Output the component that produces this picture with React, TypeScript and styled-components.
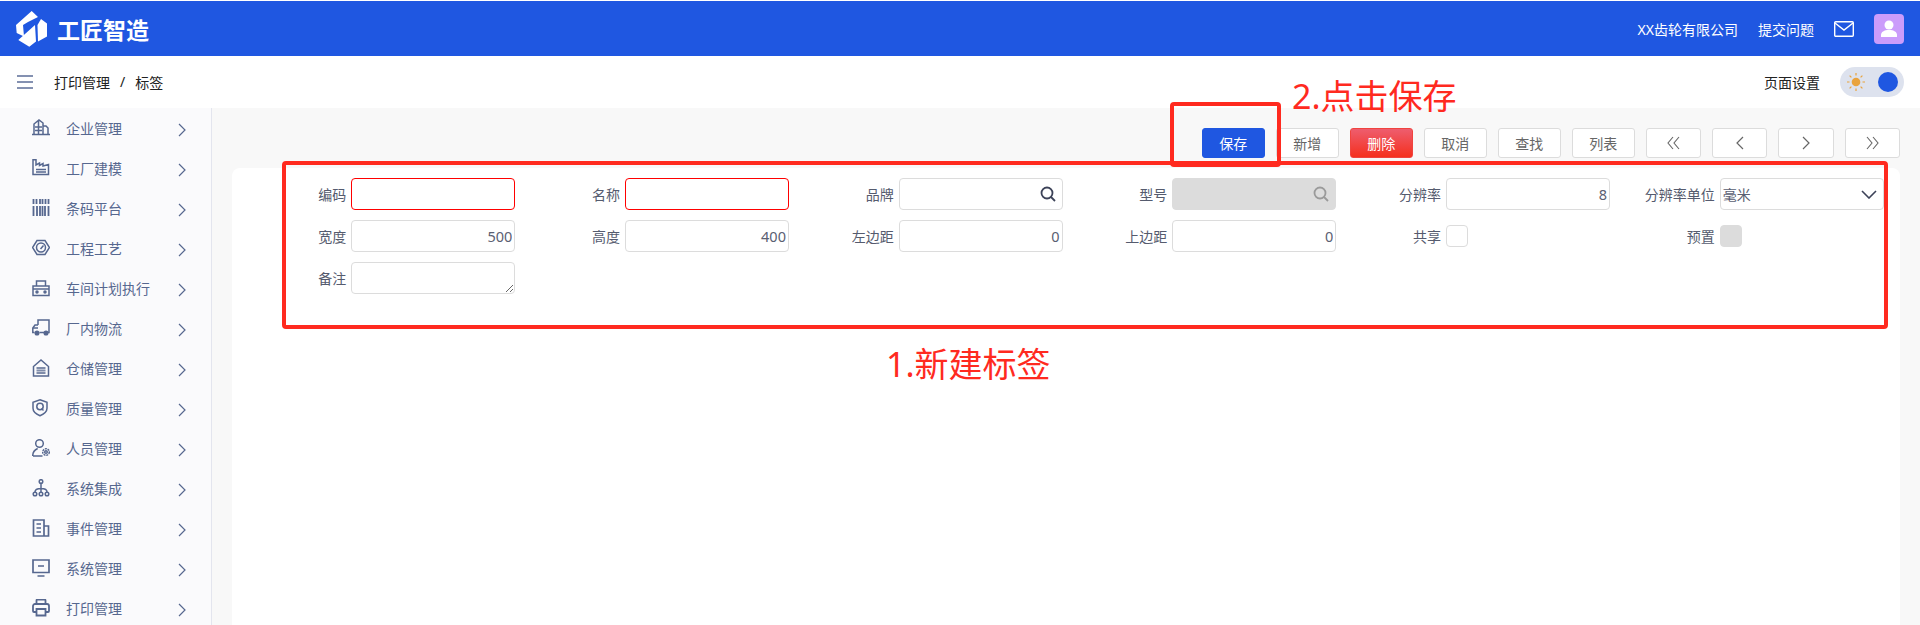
import React from "react"
import styled, { createGlobalStyle } from "styled-components"

const CJK = `"Noto Sans", "Noto Sans CJK SC", sans-serif`

const GlobalStyle = createGlobalStyle`
  html, body {
    margin: 0;
    padding: 0;
    background: #fff;
    font-family: ${CJK};
  }
  * { box-sizing: border-box; }
`

const Page = styled.div`
  position: relative;
  width: 1920px;
  height: 625px;
  padding-top: 1px;
  overflow: hidden;
  display: flex;
  flex-direction: column;
`

const Header = styled.header`
  height: 55px;
  flex: none;
  background: #1f57e1;
  color: #fff;
  display: flex;
  align-items: center;
  padding: 0 16px;
`

const Brand = styled.div`
  display: flex;
  align-items: center;
  gap: 9px;
  font-size: 23px;
  font-weight: 700;
  letter-spacing: 0;
  flex: 1;
`

const HeaderText = styled.span<{ $gap: number }>`
  font-size: 14px;
  margin-right: ${(p) => p.$gap}px;
`

const Avatar = styled.div`
  width: 30px;
  height: 30px;
  border-radius: 4px;
  background: #cb9cfb;
  display: flex;
  align-items: center;
  justify-content: center;
`

const SubBar = styled.div`
  height: 52px;
  flex: none;
  background: #fff;
  display: flex;
  align-items: center;
  padding: 0 16px 0 17px;
`

const Crumbs = styled.div`
  margin-left: 21px;
  font-size: 14px;
  color: #222;
  display: flex;
  gap: 10px;
  flex: 1;
`

const SettingLabel = styled.span`
  font-size: 14px;
  color: #222;
  margin-right: 20px;
`

const Toggle = styled.div`
  width: 64px;
  height: 30px;
  border-radius: 15px;
  background: #dde2ee;
  display: flex;
  align-items: center;
  justify-content: space-between;
  padding: 0 6px 0 7px;
`

const Knob = styled.div`
  width: 20px;
  height: 20px;
  border-radius: 50%;
  background: #1f57e1;
`

const Body = styled.div`
  flex: 1;
  display: flex;
  min-height: 0;
`

const Sidebar = styled.nav`
  width: 212px;
  flex: none;
  background: #fafafc;
  border-right: 1px solid #e3e5ee;
`

const NavItem = styled.div`
  height: 40px;
  display: flex;
  align-items: center;
  padding-left: 32px;
  color: #56678f;
  font-size: 14px;
`

const NavLabel = styled.span`
  margin-left: 16px;
  width: 112px;
`

const NavArrow = styled.span`
  display: flex;
  margin-top: 3px;
`

const Main = styled.main`
  flex: 1;
  background: #f8f8f8;
  padding: 20px 20px 0;
  display: flex;
  flex-direction: column;
  gap: 10px;
`

const Toolbar = styled.div`
  display: flex;
  justify-content: flex-end;
  gap: 11px;
`

const Button = styled.button<{ $kind?: "save" | "danger"; $icon?: boolean }>`
  width: ${(p) => (p.$icon ? 55.3 : 63)}px;
  height: 30px;
  padding: 0;
  border-radius: 3px;
  border: 1px solid ${(p) => (p.$kind === "save" ? "#1f57e1" : p.$kind === "danger" ? "#f0443f" : "#dcdcdc")};
  background: ${(p) =>
    p.$kind === "save" ? "#1f57e1" : p.$kind === "danger" ? "linear-gradient(#ee5d6e, #f5301e)" : "#fff"};
  color: ${(p) => (p.$kind ? "#fff" : "#666")};
  font: 14px ${CJK};
  display: flex;
  align-items: center;
  justify-content: center;
`

const Card = styled.section`
  flex: 1;
  background: #fff;
  border-radius: 8px 8px 0 0;
  padding: 10px 0 0 9.6px;
`

const FormGrid = styled.div`
  display: grid;
  grid-template-columns: repeat(6, 273.7px);
  row-gap: 10px;
`

const Field = styled.label`
  display: flex;
  align-items: center;
  justify-content: flex-end;
  gap: 5px;
  height: 32px;
`

const FieldLabel = styled.span`
  font-size: 14px;
  color: #555b6e;
  white-space: nowrap;
`

const Control = styled.div`
  position: relative;
  width: 164px;
  height: 32px;
  flex: none;
  display: flex;
  align-items: center;
`

const TextInput = styled.input<{ $required?: boolean; $disabled?: boolean }>`
  width: 100%;
  height: 100%;
  border: 1px solid ${(p) => (p.$required ? "#f00" : "#dcdcdc")};
  border-radius: 4px;
  background: ${(p) => (p.$disabled ? "#dcdcdc" : "#fff")};
  padding: 0 2px;
  text-align: right;
  font: 14.500px ${CJK};
  color: #5a6072;
  outline: none;
`

const TextArea = styled.textarea`
  display: block;
  width: 100%;
  height: 100%;
  border: 1px solid #dcdcdc;
  border-radius: 4px;
  background: #fff;
  padding: 3px;
  outline: none;
  font: 14px ${CJK};
`

const SearchIcon = styled.svg`
  position: absolute;
  right: 7px;
  top: 8px;
`

const SelectBox = styled.div`
  width: 100%;
  height: 100%;
  border: 1px solid #dcdcdc;
  border-radius: 4px;
  background: #fff;
  padding: 0 6px 0 2px;
  display: flex;
  align-items: center;
  justify-content: space-between;
  font-size: 14px;
  color: #5a6072;
`

const Check = styled.div<{ $off?: boolean }>`
  width: 22px;
  height: 22px;
  border: 1px solid #dcdcdc;
  border-radius: 4px;
  background: ${(p) => (p.$off ? "#dcdcdc" : "#fff")};
`

/* annotations drawn over the screenshot */
const Mark = styled.div<{ $l: number; $t: number; $w: number; $h: number }>`
  position: absolute;
  left: ${(p) => p.$l}px;
  top: ${(p) => p.$t}px;
  width: ${(p) => p.$w}px;
  height: ${(p) => p.$h}px;
  border: 4px solid #ff2a1f;
  border-radius: 4px;
  pointer-events: none;
`

const Note = styled.div<{ $l: number; $t: number }>`
  position: absolute;
  left: ${(p) => p.$l}px;
  top: ${(p) => p.$t}px;
  font-size: 34px;
  line-height: 40px;
  color: #ff2a1f;
  white-space: nowrap;
`

const Ico = ({ children }: { children: React.ReactNode }) => (
  <svg width="18" height="18" viewBox="0 0 18 18" fill="none" stroke="#56678f" strokeWidth="1.500" style={{ flex: "none" }}>
    {children}
  </svg>
)

const navItems: [string, React.ReactNode][] = [
  ["企业管理", <Ico><path d="M0 15.500h18M2 15V5l5-4 4 3v11M11 7h3l2 2v6M6.500 2v13M3 8h7M3 11.500h7" /></Ico>],
  ["工厂建模", <Ico><path d="M1 15.500V.8h3V6l3.500-2v2.500L11 4.500V7l5.500-1.500v10zM4 10.500h10M4 13h10" /></Ico>],
  ["条码平台", <Ico><path d="M1.500 0v5M4.500 0v5M8 0v5M10.500 0v5M13.500 0v5M16.500 0v5M1.500 7v10M5 7v10M8 7v10M10.500 7v10M13 7v10M16.500 7v10" strokeWidth="1.800" /></Ico>],
  ["工程工艺", <Ico><path d="M5 1.500h8L17.500 8.500 13 15.500H5L.5 8.500z" /><circle cx="9" cy="8.500" r="4.500" /><path d="M8.500 10l3-3.500" /></Ico>],
  ["车间计划执行", <Ico><path d="M4.500 7V2h9v5M1 7h16v9.500H1zM1 10h16" /><circle cx="5" cy="13" r="1" fill="#56678f" /><circle cx="13" cy="13" r="1" fill="#56678f" /></Ico>],
  ["厂内物流", <Ico><path d="M6 6V1h11v12.500H7.500M6 6H3L.8 9v4.500H2.500" /><circle cx="5" cy="14" r="1.800" fill="#56678f" /><circle cx="14" cy="14" r="1.800" fill="#56678f" /><path d="M1 9h5" /></Ico>],
  ["仓储管理", <Ico><path d="M1.500 7.500L9 1l7.500 6.500v9.500h-15z" /><path d="M4.500 9h9M4.500 11.500h9M4.500 14h9" strokeWidth="2" opacity=".75" /></Ico>],
  ["质量管理", <Ico><path d="M8 .8l7 2.500v6c0 3.500-3.500 6-7 7.500-3.500-1.500-7-4-7-7.500v-6z" /><circle cx="8" cy="7.500" r="3.200" /><path d="M9.500 9.500l2 2" /></Ico>],
  ["人员管理", <Ico><circle cx="7.500" cy="4.500" r="3.800" /><path d="M.7 17c0-4 1.500-6 5-7.500M10.500 17H1" /><circle cx="14" cy="13" r="1.300" /><circle cx="14" cy="13" r="3.300" strokeDasharray="2 .8" /></Ico>],
  ["系统集成", <Ico><circle cx="9" cy="2.500" r="1.800" /><path d="M9 4.500V13M3 13c0-2 2-3.500 6-3.500s6 1.500 6 3.500" /><circle cx="3" cy="15" r="1.800" /><circle cx="9" cy="15" r="1.800" /><circle cx="15" cy="15" r="1.800" /></Ico>],
  ["事件管理", <Ico><path d="M1.500 1h10.500v16H1.500zM12 7h4.500v10H12M4.500 5h4.500M4.500 9h4.500M4.500 13h4.500" strokeWidth="1.700" /></Ico>],
  ["系统管理", <Ico><path d="M1 1h16v12.500H1zM6 7h6M5.500 17h7" strokeWidth="1.700" /></Ico>],
  ["打印管理", <Ico><path d="M4.500 5V1.500c0-.5.5-1 1-1h7c.5 0 1 .5 1 1V5M4.500 13H2c-.5 0-1-.5-1-1V7c0-1 1-2 2-2h12c1 0 2 1 2 2v5c0 .5-.5 1-1 1h-2.500M4.500 10h9v6.500h-9z" strokeWidth="1.800" /></Ico>],
]

const Chevron = ({ color = "#56678f", left = false }: { color?: string; left?: boolean }) => (
  <svg width="8" height="14" viewBox="0 0 8 14" fill="none" stroke={color} strokeWidth="1.200">
    <path d={left ? "M7 1L1 7l6 6" : "M1 1l6 6-6 6"} />
  </svg>
)

const Double = ({ left = false }: { left?: boolean }) => (
  <svg width="13" height="14" viewBox="0 0 13 14" fill="none" stroke="#666" strokeWidth="1.100">
    <path d={left ? "M6 1L1 7l5 6M12 1L7 7l5 6" : "M1 1l5 6-5 6M7 1l5 6-5 6"} />
  </svg>
)

const Search = ({ color }: { color: string }) => (
  <SearchIcon width="16" height="16" viewBox="0 0 16 16" fill="none" stroke={color} strokeWidth="1.800">
    <circle cx="7" cy="7" r="5.500" />
    <path d="M11 11l4 4" />
  </SearchIcon>
)

const Logo = () => (
  <svg width="32" height="36" viewBox="0 0 32 36" fill="#fff">
    <path d="M0 14L15.700 0 22 6l-10 5-5 3 1 11.500-7.300-3.500z" />
    <path d="M25 8l6 4.500v13L22 30.500 21.500 14z" />
    <path d="M2.300 29L14 18.500 19 14l1 16.500-6.700 5.200z" />
  </svg>
)

const Sun = () => (
  <svg width="18" height="18" viewBox="0 0 18 18" stroke="#e9a33d" strokeWidth="1.200" style={{ flex: "none" }}>
    <circle cx="9" cy="9" r="4.300" fill="#e9a33d" stroke="none" />
    <path d="M9 0v2.500M9 15.500V18M0 9h2.500M15.500 9H18M2.600 2.600l1.800 1.800M13.600 13.600l1.800 1.800M2.600 15.400l1.800-1.800M13.600 4.400l1.800-1.800" />
  </svg>
)

const App = () => {
  return (
    <Page>
      <GlobalStyle />
      <Header>
        <Brand>
          <Logo />
          工匠智造
        </Brand>
        <HeaderText $gap={20}>XX齿轮有限公司</HeaderText>
        <HeaderText $gap={20}>提交问题</HeaderText>
        <svg width="20" height="16" viewBox="0 0 20 16" fill="none" stroke="#fff" strokeWidth="1.400" style={{ marginRight: 20 }}>
          <rect x=".7" y=".7" width="18.600" height="14.600" rx="1" />
          <path d="M1 2l9 7 9-7" />
        </svg>
        <Avatar>
          <svg width="16" height="18" viewBox="0 0 16 18" fill="#fff">
            <circle cx="8" cy="5" r="4.500" />
            <path d="M0 17v-2c0-3 3-5 8-5s8 2 8 5v2z" />
          </svg>
        </Avatar>
      </Header>
      <SubBar>
        <svg width="16" height="14" viewBox="0 0 16 14" stroke="#5c6e98" strokeWidth="1.500">
          <path d="M0 1h16M0 7h16M0 13h16" />
        </svg>
        <Crumbs>
          <span>打印管理</span>
          <span>/</span>
          <span>标签</span>
        </Crumbs>
        <SettingLabel>页面设置</SettingLabel>
        <Toggle>
          <Sun />
          <Knob />
        </Toggle>
      </SubBar>
      <Body>
        <Sidebar>
          {navItems.map(([label, icon]) => (
            <NavItem key={label}>
              {icon}
              <NavLabel>{label}</NavLabel>
              <NavArrow><Chevron /></NavArrow>
            </NavItem>
          ))}
        </Sidebar>
        <Main>
          <Toolbar>
            <Button $kind="save">保存</Button>
            <Button>新增</Button>
            <Button $kind="danger">删除</Button>
            <Button>取消</Button>
            <Button>查找</Button>
            <Button>列表</Button>
            <Button $icon><Double left /></Button>
            <Button $icon><Chevron color="#666" left /></Button>
            <Button $icon><Chevron color="#666" /></Button>
            <Button $icon><Double /></Button>
          </Toolbar>
          <Card>
            <FormGrid>
              <Field>
                <FieldLabel>编码</FieldLabel>
                <Control><TextInput $required readOnly /></Control>
              </Field>
              <Field>
                <FieldLabel>名称</FieldLabel>
                <Control><TextInput $required readOnly /></Control>
              </Field>
              <Field>
                <FieldLabel>品牌</FieldLabel>
                <Control>
                  <TextInput readOnly />
                  <Search color="#3c4258" />
                </Control>
              </Field>
              <Field>
                <FieldLabel>型号</FieldLabel>
                <Control>
                  <TextInput $disabled readOnly />
                  <Search color="#9a9a9a" />
                </Control>
              </Field>
              <Field>
                <FieldLabel>分辨率</FieldLabel>
                <Control><TextInput readOnly value="8" /></Control>
              </Field>
              <Field>
                <FieldLabel>分辨率单位</FieldLabel>
                <Control>
                  <SelectBox>
                    毫米
                    <svg width="16" height="9" viewBox="0 0 16 9" fill="none" stroke="#3c4258" strokeWidth="1.600">
                      <path d="M1 1l7 7 7-7" />
                    </svg>
                  </SelectBox>
                </Control>
              </Field>
              <Field>
                <FieldLabel>宽度</FieldLabel>
                <Control><TextInput readOnly value="500" /></Control>
              </Field>
              <Field>
                <FieldLabel>高度</FieldLabel>
                <Control><TextInput readOnly value="400" /></Control>
              </Field>
              <Field>
                <FieldLabel>左边距</FieldLabel>
                <Control><TextInput readOnly value="0" /></Control>
              </Field>
              <Field>
                <FieldLabel>上边距</FieldLabel>
                <Control><TextInput readOnly value="0" /></Control>
              </Field>
              <Field>
                <FieldLabel>共享</FieldLabel>
                <Control><Check /></Control>
              </Field>
              <Field>
                <FieldLabel>预置</FieldLabel>
                <Control><Check $off /></Control>
              </Field>
              <Field>
                <FieldLabel>备注</FieldLabel>
                <Control><TextArea readOnly /></Control>
              </Field>
            </FormGrid>
          </Card>
        </Main>
      </Body>
      <Mark $l={282} $t={161} $w={1606} $h={168} />
      <Mark $l={1170} $t={102} $w={111} $h={65} />
      <Note $l={1292} $t={76}>2.点击保存</Note>
      <Note $l={886} $t={344}>1.新建标签</Note>
    </Page>
  )
}

export default App
